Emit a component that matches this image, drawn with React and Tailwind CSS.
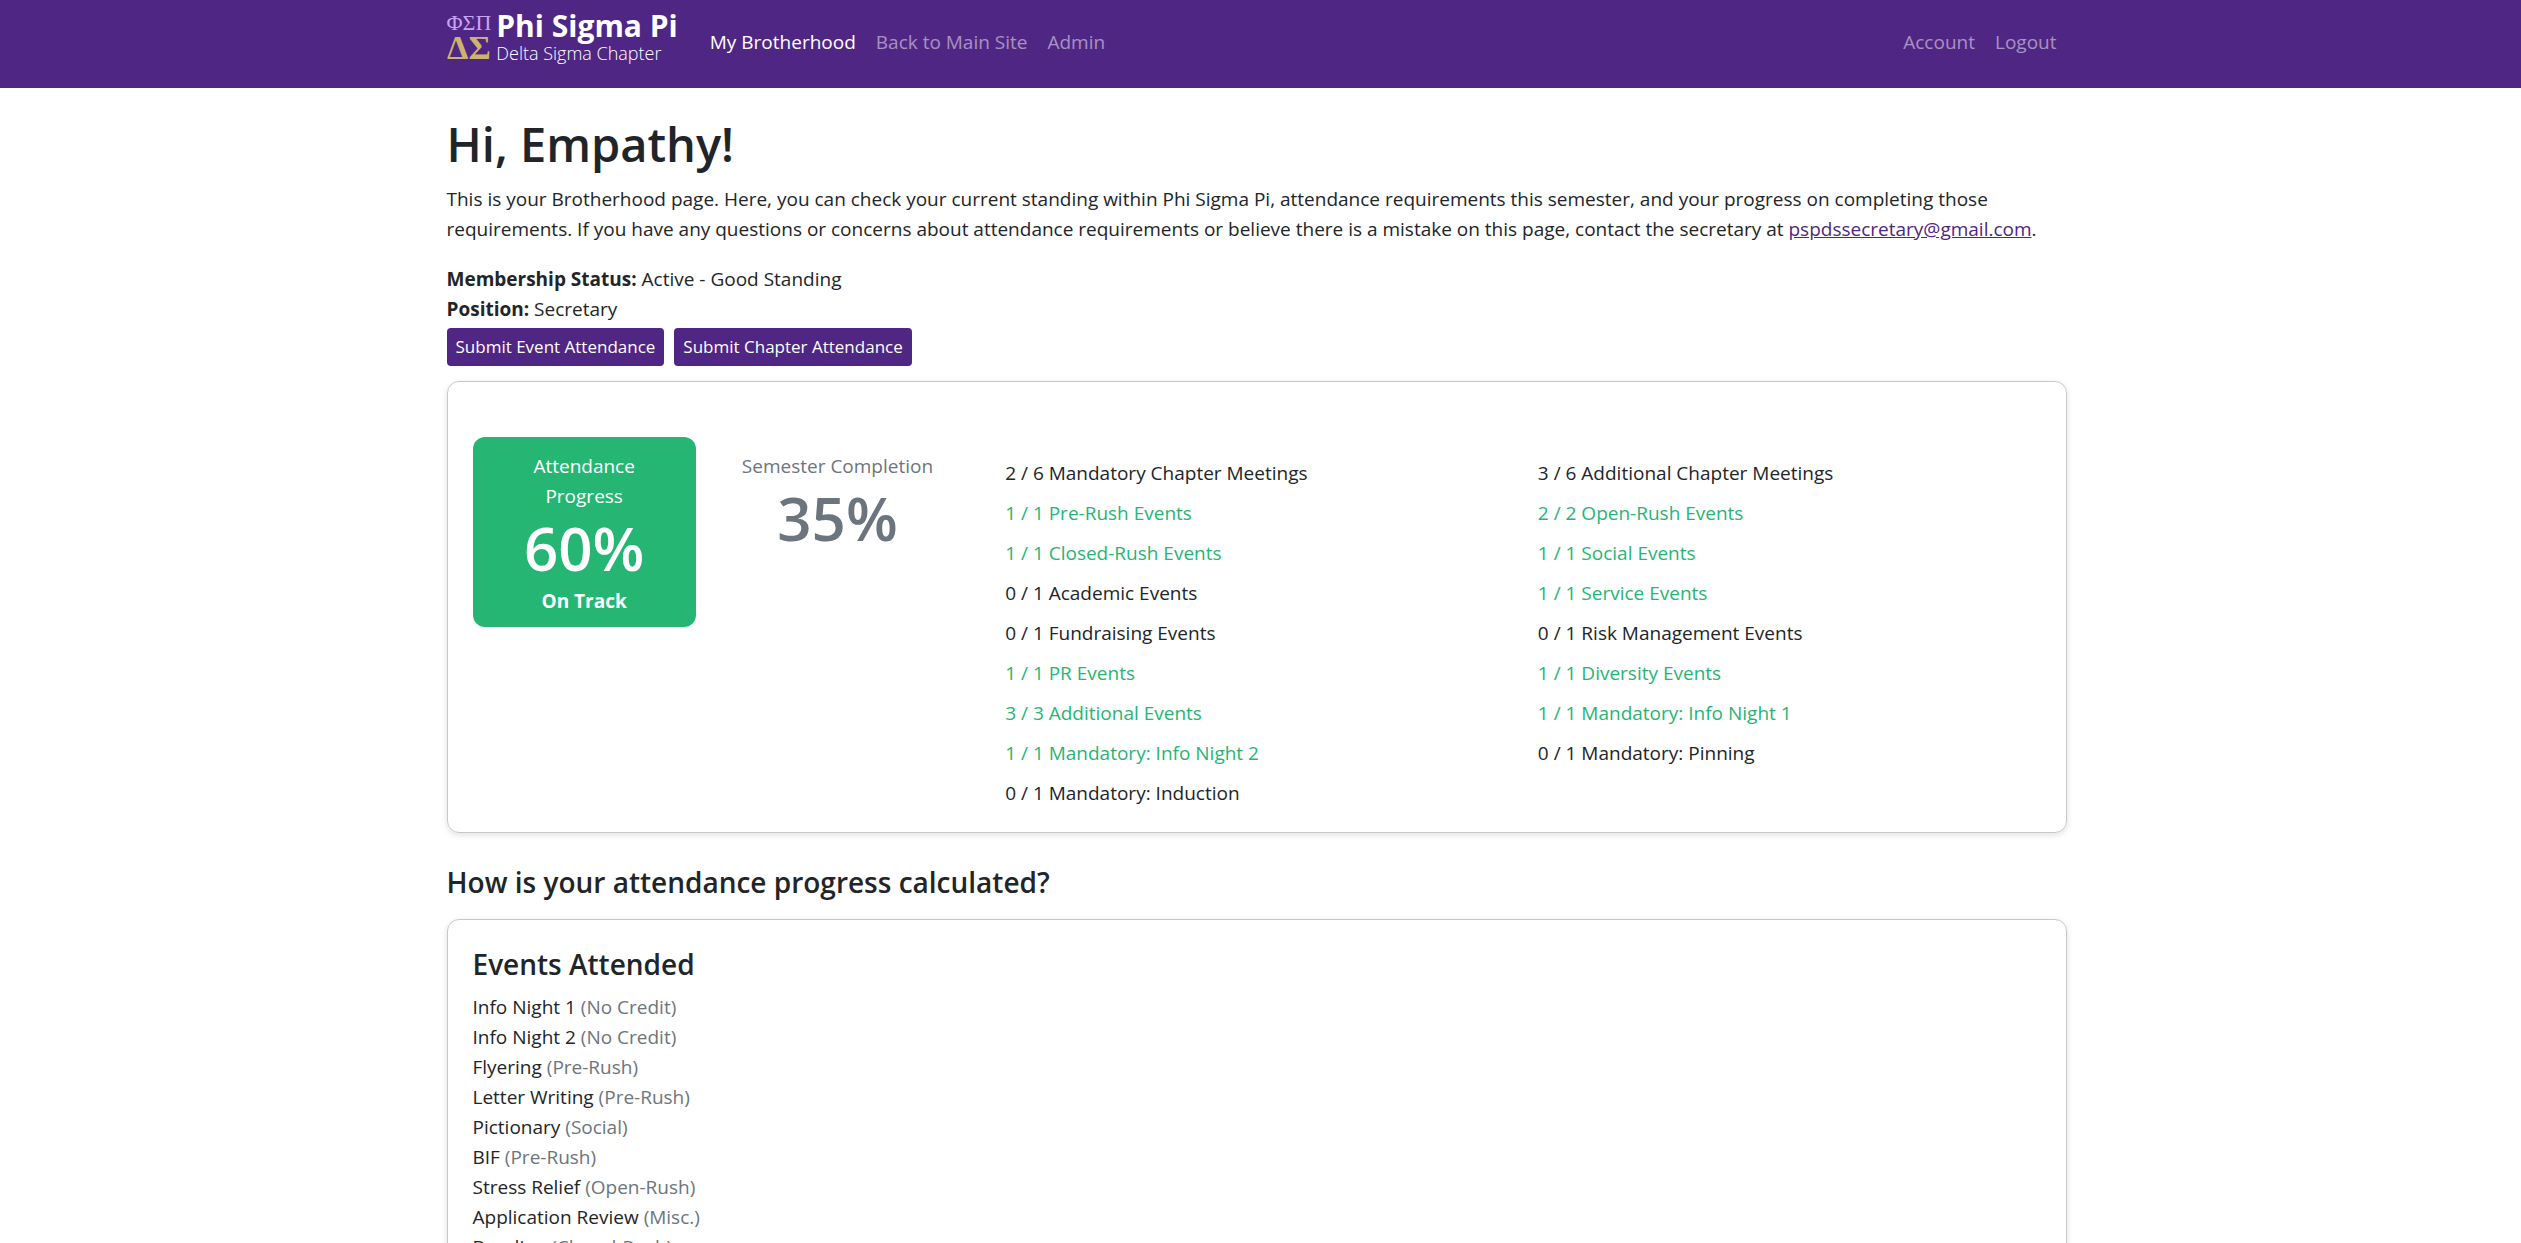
const navLinks = ['Back to Main Site', 'Admin'];

const leftRequirements = [
  { done: 2, total: 6, label: 'Mandatory Chapter Meetings' },
  { done: 1, total: 1, label: 'Pre-Rush Events' },
  { done: 1, total: 1, label: 'Closed-Rush Events' },
  { done: 0, total: 1, label: 'Academic Events' },
  { done: 0, total: 1, label: 'Fundraising Events' },
  { done: 1, total: 1, label: 'PR Events' },
  { done: 3, total: 3, label: 'Additional Events' },
  { done: 1, total: 1, label: 'Mandatory: Info Night 2' },
  { done: 0, total: 1, label: 'Mandatory: Induction' },
];

const rightRequirements = [
  { done: 3, total: 6, label: 'Additional Chapter Meetings' },
  { done: 2, total: 2, label: 'Open-Rush Events' },
  { done: 1, total: 1, label: 'Social Events' },
  { done: 1, total: 1, label: 'Service Events' },
  { done: 0, total: 1, label: 'Risk Management Events' },
  { done: 1, total: 1, label: 'Diversity Events' },
  { done: 1, total: 1, label: 'Mandatory: Info Night 1' },
  { done: 0, total: 1, label: 'Mandatory: Pinning' },
];

const events = [
  ['Info Night 1', 'No Credit'],
  ['Info Night 2', 'No Credit'],
  ['Flyering', 'Pre-Rush'],
  ['Letter Writing', 'Pre-Rush'],
  ['Pictionary', 'Social'],
  ['BIF', 'Pre-Rush'],
  ['Stress Relief', 'Open-Rush'],
  ['Application Review', 'Misc.'],
  ['Bonding', 'Closed-Rush'],
];

function Logo() {
  return (
    <a href="#" className="flex items-start gap-[5px] text-white">
      <span className="grid justify-items-center font-['Liberation_Serif',serif]">
        <span className="text-[22px] leading-[24px] text-[#c9a4f5]">ΦΣΠ</span>
        <span className="text-[34px] leading-[26px] font-bold text-[#cdb46e]">ΔΣ</span>
      </span>
      <span className="grid">
        <span className="text-[30px] leading-[30px] font-bold">Phi Sigma Pi</span>
        <span className="text-[18px] leading-[24px] font-light">Delta Sigma Chapter</span>
      </span>
    </a>
  );
}

function RequirementList({ items }) {
  return (
    <ul className="grid content-start gap-[10px] pt-[21px]">
      {items.map((r) => (
        <li key={r.label} className={r.done >= r.total ? 'text-[#26b674]' : ''}>
          {r.done} / {r.total} {r.label}
        </li>
      ))}
    </ul>
  );
}

function Card({ children, className }) {
  return (
    <section className={`rounded-xl border border-[#c8c8c8] px-[25px] shadow-[0_2px_6px_rgba(0,0,0,0.12)] ${className}`}>
      {children}
    </section>
  );
}

export default function App() {
  return (
    <div className="bg-white font-['Open_Sans','Noto_Sans',sans-serif] text-[19px] leading-[30px] text-[#212529]">
      <header className="bg-[#4f2683] pr-2">
        <div className="mx-auto flex h-[88px] max-w-[1650px] items-start px-[15px] pt-[11px]">
          <Logo />
          <nav className="flex grow gap-5 pt-4 pl-8 text-white/50">
            <a href="#" className="text-white">My Brotherhood</a>
            {navLinks.map((l) => (
              <a key={l} href="#">{l}</a>
            ))}
          </nav>
          <nav className="flex gap-5 pt-4 pr-[10px] text-white/50">
            <a href="#">Account</a>
            <a href="#">Logout</a>
          </nav>
        </div>
      </header>

      <div className="pr-2">
        <main className="mx-auto max-w-[1650px] px-[15px] pt-[26px]">
          <h1 className="mb-[10px] text-[47px] leading-[60px] font-semibold">Hi, Empathy!</h1>
          <p className="mb-5">
            This is your Brotherhood page. Here, you can check your current standing within Phi Sigma Pi, attendance
            requirements this semester, and your progress on completing those requirements. If you have any questions or
            concerns about attendance requirements or believe there is a mistake on this page, contact the secretary at{' '}
            <a href="mailto:pspdssecretary@gmail.com" className="text-[#4f2683] underline">pspdssecretary@gmail.com</a>.
          </p>
          <p><strong>Membership Status:</strong> Active - Good Standing</p>
          <p><strong>Position:</strong> Secretary</p>
          <div className="mt-1 mb-[15px] flex gap-[10px] text-[17px] leading-[28px] text-white">
            <button type="button" className="rounded-[4px] bg-[#4f2683] px-[9px] py-[5px]">Submit Event Attendance</button>
            <button type="button" className="rounded-[4px] bg-[#4f2683] px-[9px] py-[5px]">Submit Chapter Attendance</button>
          </div>

          <Card className="grid grid-cols-3 gap-[30px] pt-[55px] pb-6">
            <div className="grid grid-cols-2 content-start gap-[30px] pr-[26px] text-center">
              <div className="rounded-xl bg-[#26b674] px-[30px] pt-[14px] pb-[11px] text-white">
                <p>Attendance Progress</p>
                <p className="text-[60px] leading-[75px] font-semibold">60%</p>
                <p className="font-bold">On Track</p>
              </div>
              <div className="pt-[14px] text-[#6c757d]">
                <p>Semester Completion</p>
                <p className="text-[60px] leading-[75px] font-semibold">35%</p>
              </div>
            </div>
            <RequirementList items={leftRequirements} />
            <RequirementList items={rightRequirements} />
          </Card>

          <h2 className="mt-[31px] mb-[19px] text-[28px] leading-[36px] font-semibold">How is your attendance progress calculated?</h2>
          <Card className="pt-[25px] pb-[25px]">
            <h2 className="mb-[9px] text-[28px] leading-[38px] font-semibold">Events Attended</h2>
            <ul>
              {events.map(([name, type]) => (
                <li key={name}>
                  {name} <span className="text-[#6c757d]">({type})</span>
                </li>
              ))}
            </ul>
          </Card>
        </main>
      </div>
    </div>
  );
}
